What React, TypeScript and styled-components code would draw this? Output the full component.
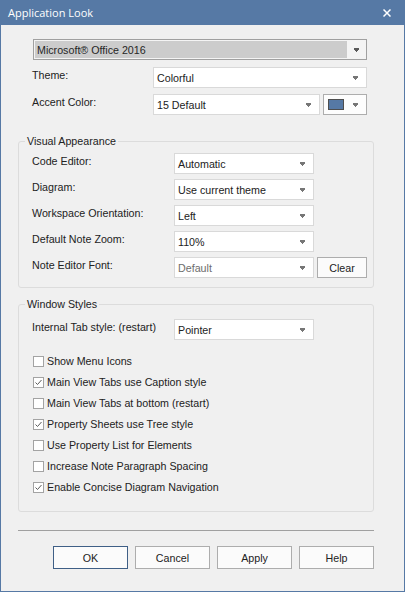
import React from "react";
import styled, { createGlobalStyle } from "styled-components";

const Global = createGlobalStyle`
  html, body { margin: 0; padding: 0; background: #f0f0f0; }
  * { box-sizing: border-box; }
`;

const BLUE = "#5679a5";

const Window = styled.div`
  width: 405px;
  height: 592px;
  border: 1px solid ${BLUE};
  border-top: 0;
  background: #f0f0f0;
  display: flex;
  flex-direction: column;
  font-family: "Liberation Sans", Arial, sans-serif;
  font-size: 10.7px;
  color: #222222;
  overflow: hidden;
`;

const TitleBar = styled.div`
  height: 25px;
  margin: 0 -1px;
  background: ${BLUE};
  display: flex;
  align-items: center;
  justify-content: space-between;
  padding: 0 14px 0 8px;
  color: #ffffff;
  font-family: "Open Sans", "Noto Sans", sans-serif;
  font-size: 11px;
`;

const Title = styled.span`
  line-height: 14px;
  padding-top: 1px;
`;

const CloseIcon = () => (
  <svg width="8" height="8" viewBox="0 0 8 8">
    <path d="M0.5 0.5 L7.5 7.5 M7.5 0.5 L0.5 7.5" stroke="#ffffff" strokeWidth="1.5" />
  </svg>
);

const Body = styled.div`
  display: flex;
  flex-direction: column;
  padding: 14px 30px 0 17px;
`;

const TopSection = styled.div`
  display: grid;
  grid-template-columns: 118px 1fr;
  column-gap: 3px;
  row-gap: 6px;
  margin: 0 7px 20px 14px;
`;

const Label = styled.div`
  line-height: 14px;
  padding-top: 1px;
  align-self: start;
  white-space: nowrap;
`;

const Combo = styled.div<{ $disabled?: boolean; $width?: number }>`
  height: 21px;
  ${(p) => (p.$width ? `width: ${p.$width}px;` : "")}
  border: 1px solid #d9d9d9;
  background: #ffffff;
  display: flex;
  align-items: center;
  justify-content: space-between;
  padding: 0 8px 0 3px;
  color: ${(p) => (p.$disabled ? "#6d6d6d" : "#222222")};
  white-space: nowrap;
`;

const StyleCombo = styled.div`
  grid-column: 1 / -1;
  margin-left: 1px;
  height: 21px;
  margin-bottom: 1px;
  border: 1px solid #a0a0a0;
  background: #f4f4f4;
  padding: 1px;
  display: flex;
  align-items: stretch;
`;

const StyleComboField = styled.div`
  flex: 1;
  background: #cccccc;
  display: flex;
  align-items: center;
  padding-left: 2px;
  color: #262626;
`;

const StyleComboButton = styled.div`
  width: 18px;
  display: flex;
  align-items: center;
  justify-content: center;
  padding-left: 1px;
`;

const ControlPair = styled.div`
  display: flex;
  gap: 3px;
`;

const ColorButton = styled.div`
  width: 44px;
  height: 21px;
  border: 1px solid #adadad;
  background: #fdfdfd;
  display: flex;
  align-items: center;
  justify-content: space-between;
  padding: 0 8px 0 4px;
`;

const Swatch = styled.div<{ $color: string }>`
  width: 16px;
  height: 11px;
  border: 1px solid #4e4e4e;
  background: ${(p) => p.$color};
`;

const Arrow = ({ color = "#767676" }: { color?: string }) => (
  <svg width="5" height="4" viewBox="0 0 5 4" shapeRendering="crispEdges">
    <rect x="0" y="0" width="5" height="2" fill={color} />
    <rect x="1" y="2" width="3" height="1" fill={color} />
    <rect x="2" y="3" width="1" height="1" fill={color} />
  </svg>
);

const Group = styled.fieldset<{ $mt?: number }>`
  margin: ${(p) => p.$mt ?? 0}px 0 0 0;
  padding: 0;
  min-width: 0;
  border: 1px solid #dcdcdc;
  border-radius: 3px;
`;

const Legend = styled.legend`
  margin-left: 6px;
  padding: 0 2px;
  line-height: 13px;
  font-size: 10.7px;
  color: #222222;
`;

const GroupBody = styled.div<{ $pt: number; $pb: number }>`
  padding: ${(p) => p.$pt}px 0 ${(p) => p.$pb}px 13px;
`;

const FormGrid = styled.div`
  display: grid;
  grid-template-columns: 139px 140px 50px;
  column-gap: 3px;
  row-gap: 5px;
`;

const PushButton = styled.div`
  height: 21px;
  width: 50px;
  border: 1px solid #adadad;
  background: #fbfbfb;
  display: flex;
  align-items: center;
  justify-content: center;
  color: #222222;
`;

const DialogButton = styled(PushButton)<{ $primary?: boolean }>`
  height: 23px;
  width: 75px;
  border-color: ${(p) => (p.$primary ? "#3f5f86" : "#adadad")};
`;

const CheckList = styled.div`
  display: flex;
  flex-direction: column;
  margin-top: 11px;
`;

const CheckRow = styled.label`
  height: 21px;
  display: flex;
  align-items: center;
  gap: 3px;
  padding-left: 1px;
  white-space: nowrap;
`;

const Box = styled.span`
  width: 11px;
  height: 11px;
  border: 1px solid #a3a3a3;
  background: #ffffff;
  display: flex;
  align-items: center;
  justify-content: center;
  flex: none;
`;

const CheckText = styled.span`
  line-height: 14px;
  margin-top: -1px;
`;

const Separator = styled.div`
  height: 1px;
  background: #a0a0a0;
  margin-top: 18px;
`;

const ButtonRow = styled.div`
  display: flex;
  gap: 7px;
  margin-top: 15px;
  padding-left: 35px;
`;

const CheckBox = ({ checked, label }: { checked?: boolean; label: string }) => (
  <CheckRow>
    <Box>
      {checked && (
        <svg width="9" height="9" viewBox="0 0 9 9">
          <path d="M1.5 4.5 L3.5 6.5 L7.5 2" stroke="#5a5a5a" strokeWidth="1" fill="none" />
        </svg>
      )}
    </Box>
    <CheckText>{label}</CheckText>
  </CheckRow>
);

export default function App() {
  return (
    <>
      <Global />
      <Window>
        <TitleBar>
          <Title>Application Look</Title>
          <CloseIcon />
        </TitleBar>
        <Body>
          <TopSection>
            <StyleCombo>
              <StyleComboField>Microsoft® Office 2016</StyleComboField>
              <StyleComboButton>
                <Arrow color="#5a5a5a" />
              </StyleComboButton>
            </StyleCombo>
            <Label>Theme:</Label>
            <Combo>
              <span>Colorful</span>
              <Arrow />
            </Combo>
            <Label>Accent Color:</Label>
            <ControlPair>
              <Combo $width={167}>
                <span>15 Default</span>
                <Arrow />
              </Combo>
              <ColorButton>
                <Swatch $color={BLUE} />
                <Arrow />
              </ColorButton>
            </ControlPair>
          </TopSection>

          <Group>
            <Legend>Visual Appearance</Legend>
            <GroupBody $pt={5} $pb={9}>
              <FormGrid>
                <Label>Code Editor:</Label>
                <Combo>
                  <span>Automatic</span>
                  <Arrow />
                </Combo>
                <span />
                <Label>Diagram:</Label>
                <Combo>
                  <span>Use current theme</span>
                  <Arrow />
                </Combo>
                <span />
                <Label>Workspace Orientation:</Label>
                <Combo>
                  <span>Left</span>
                  <Arrow />
                </Combo>
                <span />
                <Label>Default Note Zoom:</Label>
                <Combo>
                  <span>110%</span>
                  <Arrow />
                </Combo>
                <span />
                <Label>Note Editor Font:</Label>
                <Combo $disabled>
                  <span>Default</span>
                  <Arrow />
                </Combo>
                <PushButton>Clear</PushButton>
              </FormGrid>
            </GroupBody>
          </Group>

          <Group $mt={10}>
            <Legend>Window Styles</Legend>
            <GroupBody $pt={8} $pb={13}>
              <FormGrid>
                <Label>Internal Tab style: (restart)</Label>
                <Combo>
                  <span>Pointer</span>
                  <Arrow />
                </Combo>
              </FormGrid>
              <CheckList>
                <CheckBox label="Show Menu Icons" />
                <CheckBox checked label="Main View Tabs use Caption style" />
                <CheckBox label="Main View Tabs at bottom (restart)" />
                <CheckBox checked label="Property Sheets use Tree style" />
                <CheckBox label="Use Property List for Elements" />
                <CheckBox label="Increase Note Paragraph Spacing" />
                <CheckBox checked label="Enable Concise Diagram Navigation" />
              </CheckList>
            </GroupBody>
          </Group>

          <Separator />

          <ButtonRow>
            <DialogButton $primary>OK</DialogButton>
            <DialogButton>Cancel</DialogButton>
            <DialogButton>Apply</DialogButton>
            <DialogButton>Help</DialogButton>
          </ButtonRow>
        </Body>
      </Window>
    </>
  );
}
